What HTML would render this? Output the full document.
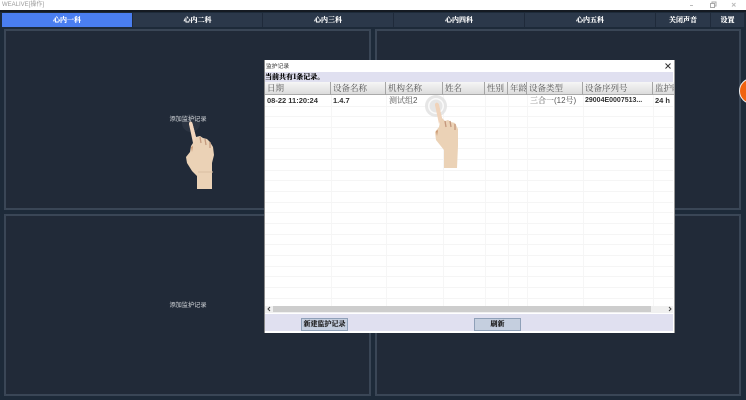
<!DOCTYPE html>
<html lang="zh">
<head>
<meta charset="utf-8">
<style>
html,body{margin:0;padding:0}
body{width:746px;height:400px;overflow:hidden;position:relative;background:#1d2a39;font-family:"Liberation Sans","Noto Serif CJK SC",serif}
div,span{position:absolute;box-sizing:border-box;white-space:nowrap}
#wrap{left:0;top:0;width:746px;height:400px;filter:blur(.3px);overflow:hidden}
.top{left:0;top:0;width:746px;height:12px;background:#fff;border-bottom:2px solid #141a22}
.ttl{left:2px;top:1px;font:6px/8px "Liberation Sans","Noto Sans CJK SC",sans-serif;color:#999}
.tab{top:13px;height:14px;background:#2b384a;border-right:1px solid #1f2a3a;color:#fff;font:bold 7px/14px "Noto Serif CJK SC",serif;text-align:center;text-shadow:0 0 .4px #fff}
.tab.on{background:#4a7ef0}
.panel{background:#212a38;border:2px solid #3a4656}
.lbl{color:#d5d8dc;font:6.2px/8px "Noto Sans CJK SC",sans-serif;width:50px;text-align:center}
.modal{left:264px;top:60px;width:411px;height:273px;background:#fff;border-right:1px solid #999;border-left:1px solid #888}
.mt{left:1px;top:2px;font:5.8px/8px "Noto Sans CJK SC",sans-serif;color:#333}
.sub{left:0;top:12px;width:408px;height:10px;background:#e0e0f0;font:bold 7px/10px "Noto Serif CJK SC",serif;color:#000;text-shadow:0 0 .4px #000}
.hd{left:0;top:22px;width:409px;height:13px;background:linear-gradient(#f6f6f6,#dcdcdc);border-bottom:1px solid #aaa}
.th{top:22px;height:13px;border-right:1px solid #a5a5a5;font:8.5px/13px "Noto Serif CJK SC",serif;color:#555;padding-left:2px;overflow:hidden}
.td{top:35px;height:12px;font:bold 7.5px/12px "Liberation Sans",sans-serif;color:#333}
.hl{left:0;width:408px;height:1px;background:#f5f5f5}
.vl{top:35px;width:1px;height:211px;background:#f6f6f6}
.foot{left:0;top:254px;width:408px;height:17px;background:#e0e0f0}
.btn{top:4px;height:13px;width:47px;background:#c5cfdf;border:1px solid #8fa0b8;font:bold 7px/11px "Noto Serif CJK SC",serif;color:#222;text-align:center;text-shadow:0 0 .4px #222}
</style>
</head>
<body>
<div id="wrap">
<div class="top"><div class="ttl">WEALIVE[操作]</div>
<svg style="position:absolute;left:690px;top:0" width="56" height="10">
<path d="M0 5.500H3" stroke="#bbb" fill="none"/>
<path d="M20.500 3.500h4v4h-4zM22 3V2h4v4h-1" stroke="#aaa" fill="none"/>
<path d="M42 3l3.500 3.500M45.500 3L42 6.500" stroke="#bbb" fill="none"/>
</svg></div>

<div class="tab on" style="left:2px;width:131px">心内一科</div>
<div class="tab" style="left:133px;width:130px">心内二科</div>
<div class="tab" style="left:263px;width:131px">心内三科</div>
<div class="tab" style="left:394px;width:131px">心内四科</div>
<div class="tab" style="left:525px;width:131px">心内五科</div>
<div class="tab" style="left:656px;width:55px">关闭声音</div>
<div class="tab" style="left:711px;width:34px">设置</div>

<div class="panel" style="left:4px;top:29px;width:367px;height:181px"></div>
<div class="panel" style="left:375px;top:29px;width:366px;height:181px"></div>
<div class="panel" style="left:4px;top:214px;width:367px;height:182px"></div>
<div class="panel" style="left:375px;top:214px;width:366px;height:182px"></div>

<div class="lbl" style="left:163px;top:115px">添加监护记录</div>
<div class="lbl" style="left:163px;top:301px">添加监护记录</div>

<svg style="position:absolute;left:0;top:0" width="746" height="400">
<circle cx="191" cy="123" r="9" fill="#fff" opacity=".05"/>
<path d="M189 124c0-3 3-3 3.500-.5L196 137l4-1 3 2 4 1 3 3 3 5 1 8-2 8v26h-15v-13l-5-5-5-8-1-6 4-5 1-6 2-3z" fill="#ebd2b6"/>
<path d="M189 124c0-3 3-3 3.500-.5L196 137l-2 6z" fill="#f2d5bd"/>
<path d="M200 137l1 6M205 139l1 6M210 142l0 6" stroke="#c49a7e" stroke-width="1.300" fill="none"/>
<path d="M191 147l2-1-1 6z" fill="#c9946e"/>
<path d="M198 172h15" stroke="#d9bfa3" fill="none"/>
</svg>

<div class="modal">
<div class="mt">监护记录</div>
<svg style="position:absolute;left:399px;top:2px" width="8" height="8"><path d="M1.500 1.500l5 5M6.500 1.500l-5 5" stroke="#333" stroke-width="1" fill="none"/></svg>
<div class="sub">当前共有1条记录。</div>
<div class="hd"></div>
<div class="th" style="left:0;width:66px">日期</div>
<div class="th" style="left:66px;width:55px">设备名称</div>
<div class="th" style="left:121px;width:57px">机构名称</div>
<div class="th" style="left:178px;width:42px">姓名</div>
<div class="th" style="left:220px;width:23px">性别</div>
<div class="th" style="left:243px;width:19px">年龄</div>
<div class="th" style="left:262px;width:56px">设备类型</div>
<div class="th" style="left:318px;width:70px">设备序列号</div>
<div class="th" style="left:388px;width:21px;border-right:0">监护时长</div>

<div class="vl" style="left:66px"></div><div class="vl" style="left:121px"></div><div class="vl" style="left:178px"></div><div class="vl" style="left:220px"></div><div class="vl" style="left:243px"></div><div class="vl" style="left:262px"></div><div class="vl" style="left:318px"></div><div class="vl" style="left:388px"></div>
<div class="hl" style="top:46px"></div><div class="hl" style="top:56px"></div><div class="hl" style="top:67px"></div><div class="hl" style="top:78px"></div><div class="hl" style="top:88px"></div><div class="hl" style="top:99px"></div><div class="hl" style="top:110px"></div><div class="hl" style="top:120px"></div><div class="hl" style="top:131px"></div><div class="hl" style="top:142px"></div><div class="hl" style="top:152px"></div><div class="hl" style="top:163px"></div><div class="hl" style="top:174px"></div><div class="hl" style="top:184px"></div><div class="hl" style="top:195px"></div><div class="hl" style="top:206px"></div><div class="hl" style="top:216px"></div><div class="hl" style="top:227px"></div><div class="hl" style="top:238px"></div>

<div class="td" style="left:2px">08-22 11:20:24</div>
<div class="td" style="left:68px">1.4.7</div>
<div class="td" style="left:124px;font:8px/12px 'Liberation Sans','Noto Serif CJK SC',serif;color:#555">测试组2</div>
<div class="td" style="left:265px;font:8px/12px 'Liberation Sans','Noto Serif CJK SC',serif;color:#555">三合一(12号)</div>
<div class="td" style="left:320px;font-size:7px">29004E0007513...</div>
<div class="td" style="left:390px">24 h</div>

<div style="left:0;top:246px;width:408px;height:7px;background:#f0f0f0"></div>
<div style="left:8px;top:246px;width:378px;height:6px;background:#cdcdcd"></div>
<svg style="position:absolute;left:0;top:245px" width="409" height="8"><path d="M5 2L3 4l2 2M404 2l2 2-2 2" stroke="#444" fill="none"/></svg>
<div class="foot">
<div class="btn" style="left:36px">新建监护记录</div>
<div class="btn" style="left:209px">刷新</div>
</div>
</div>

<svg style="position:absolute;left:0;top:0" width="746" height="400">
<circle cx="436" cy="106" r="11" fill="#e2e2e2" opacity=".85"/>
<circle cx="436" cy="106" r="8" fill="#fafafa"/>
<circle cx="436" cy="106" r="6.500" fill="#e6e6e6"/>
<path d="M435 105c0-3 3.500-3 4 0l3 13 3 3 3-1 3 2 4 1 3 6v17l-1 22h-13v-18l-8-10-1-8 4-5 1-5z" fill="#ebd2b6"/>
<path d="M435 105c0-3 3.500-3 4 0l3 13-3 6z" fill="#f0d3ba"/>
<path d="M445 121l1 6M450 121l1 6M455 124l0 6" stroke="#c4977c" stroke-width="1.300" fill="none"/>
<path d="M436 131l2-1-1 6z" fill="#c9946e"/>
</svg>

<div style="left:739px;top:78px;width:26px;height:26px;border-radius:50%;background:#f0620f;border:1px solid #eee"></div>
</div>
</body>
</html>
